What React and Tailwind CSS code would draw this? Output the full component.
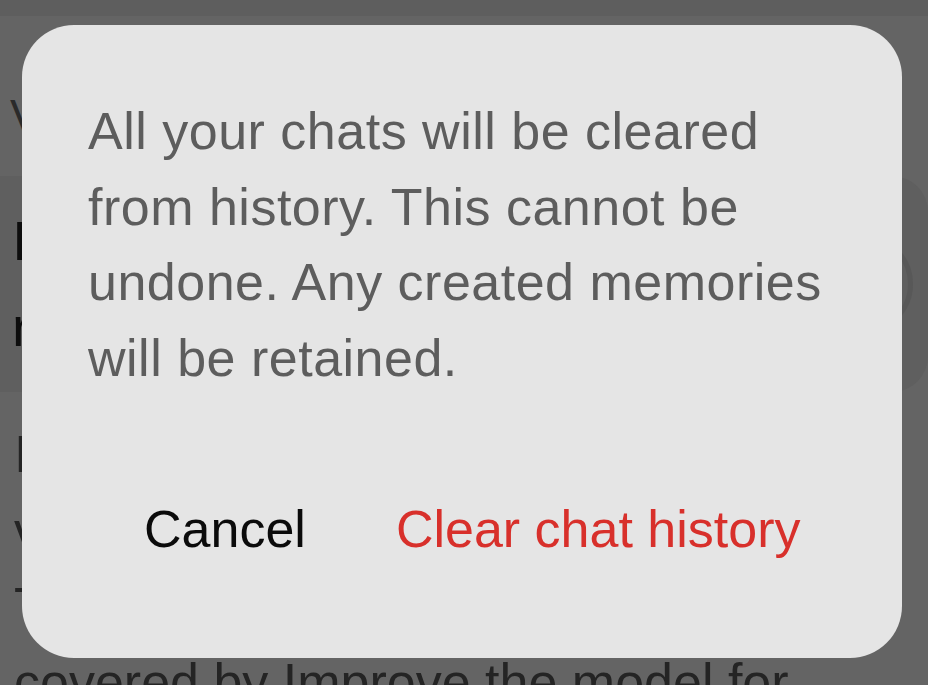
export default function App() {
  return (
    <div
      className="relative w-[928px] h-[685px] overflow-hidden bg-[#646464]"
      style={{ fontFamily: '"Liberation Sans", Arial, sans-serif' }}
    >
      {/* dimmed page behind the alert */}
      <div className="h-[16px] bg-[#5e5e5e]" />
      <div className="mt-[72px] pl-[10px] text-[46px] leading-[56px] text-[#2a2a2a] whitespace-nowrap">
        Voice mode
      </div>
      <div className="mt-[32px] h-[216px] bg-[#5f5f5f] rounded-r-[36px] flex items-center justify-between pl-[12px] pr-[15px]">
        <div className="text-[56px] leading-[86px] text-[#0d0d0d] whitespace-nowrap">
          <div>Include your audio</div>
          <div>recordings</div>
        </div>
        <div className="w-[100px] h-[100px] rounded-full border-[5px] border-[#585858] shrink-0" />
      </div>
      <div className="mt-[24px] pl-[14px] text-[52px] leading-[76px] text-[#242424] whitespace-nowrap">
        <div>If you turn this off, audio and</div>
        <div>video recordings won't be used.</div>
        <div>Transcripts of voice chats are</div>
        <div>covered by Improve the model for</div>
      </div>

      {/* alert */}
      <div className="absolute left-[22px] top-[25px] w-[880px] h-[633px] rounded-[52px] bg-[#e5e5e5] pt-[69px] pl-[66px] pr-[50px]">
        <p className="text-[52px] leading-[75.5px] tracking-[0.5px] text-[#5d5d5d]">
          All your chats will be cleared from history. This cannot be undone. Any created memories will be retained.
        </p>
        <div className="mt-[103px] flex gap-[90px] pl-[56px] text-[52px] leading-[60px] whitespace-nowrap">
          <button className="text-[#0b0b0b]">Cancel</button>
          <button className="text-[#d8302b]">Clear chat history</button>
        </div>
      </div>
    </div>
  );
}
